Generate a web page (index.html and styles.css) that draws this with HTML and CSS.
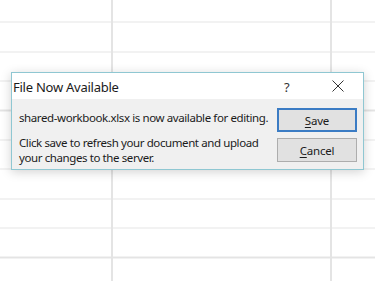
FILE: index.html
```html
<!DOCTYPE html>
<html lang="en">
<head>
<meta charset="utf-8">
<title>File Now Available</title>
<link rel="stylesheet" href="styles.css">
</head>
<body>
<div class="sheet"></div>
<div class="dialog" role="dialog" aria-labelledby="dlg-title">
  <div class="titlebar">
    <span class="title" id="dlg-title">File Now Available</span>
    <span class="help">?</span>
    <span class="close" aria-label="Close">
      <svg width="12" height="12" viewBox="0 0 12 12"><path d="M0.5 0.5 L11.5 11.5 M11.5 0.5 L0.5 11.5" stroke="#333" stroke-width="1" fill="none"/></svg>
    </span>
  </div>
  <div class="content">
    <div class="messages">
      <p class="msg first">shared-workbook.xlsx is now available for editing.</p>
      <p class="msg">Click save to refresh your document and upload your changes to the server.</p>
    </div>
    <div class="buttons">
      <button class="btn primary"><u>S</u>ave</button>
      <button class="btn"><u>C</u>ancel</button>
    </div>
  </div>
</div>
</body>
</html>
```
FILE: styles.css
```css
* { box-sizing: border-box; }
html, body { margin: 0; padding: 0; }
body {
  width: 375px;
  height: 281px;
  overflow: hidden;
  background: #fff;
  position: relative;
  font-family: "Noto Sans", "Open Sans", sans-serif;
  color: #1b1b1b;
}
.sheet {
  width: 375px;
  height: 281px;
  background-color: #fff;
  background-image:
    linear-gradient(to right, transparent 111px, #e4e4e4 111px, #e4e4e4 113px, transparent 113px, transparent 330px, #e4e4e4 330px, #e4e4e4 332px, transparent 332px),
    repeating-linear-gradient(to bottom, transparent 0, transparent 28.2px, #e4e4e4 28.2px, #e4e4e4 29.4px);
  background-position: 0 0, 0 -6.5px;
}
.dialog {
  position: absolute;
  left: 11px;
  top: 72px;
  width: 353px;
  height: 98px;
  border: 1px solid #8fc7d2;
  background: #f0f0f0;
  box-shadow: 0 2px 10px rgba(0,0,0,0.18);
  display: flex;
  flex-direction: column;
}
.titlebar {
  height: 26px;
  background: #fff;
  display: flex;
  align-items: center;
  padding-left: 1px;
}
.title {
  font-size: 13px;
  letter-spacing: -0.25px;
  flex: 1;
  padding-top: 2px;
  color: #1b1b1b;
}
.help {
  font-size: 13px;
  width: 12px;
  margin-right: 36px;
  padding-top: 2px;
  color: #333;
}
.close {
  width: 12px;
  height: 12px;
  margin-right: 19px;
  display: flex;
}
.content {
  flex: 1;
  display: flex;
  padding: 9px 6px 0 7px;
}
.messages { flex: 1; }
.msg {
  margin: 0;
  font-size: 11.5px;
  letter-spacing: -0.4px;
  line-height: 15px;
  width: 256px;
}
.msg.first { margin-top: 2px; margin-bottom: 10px; }
.buttons {
  display: flex;
  flex-direction: column;
  gap: 6px;
}
.btn {
  width: 80px;
  height: 24px;
  font-family: inherit;
  font-size: 11.5px;
  letter-spacing: -0.2px;
  color: #1b1b1b;
  background: #e1e1e1;
  border: 1px solid #adadad;
  padding: 0;
  margin: 0;
}
.btn.primary {
  border: 2px solid #3b7cc4;
}
.btn u { text-underline-offset: 2px; }
```
